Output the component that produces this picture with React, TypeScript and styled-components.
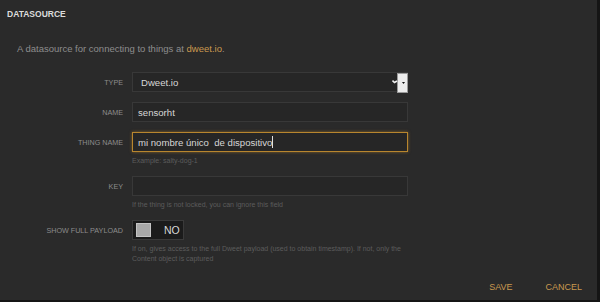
import React from "react";
import styled, { createGlobalStyle, css } from "styled-components";

const Global = createGlobalStyle`
  html, body { margin: 0; padding: 0; background: #151515; }
  body { font-family: "Liberation Sans", Arial, Helvetica, sans-serif; }
`;

const Page = styled.div`
  width: 600px;
  height: 302px;
  display: flex;
  background: #151515;
`;

const Panel = styled.div`
  width: 597px;
  height: 300px;
  display: flex;
  flex-direction: column;
  background: #2a2a2a;
`;

const Header = styled.div`
  height: 28px;
  padding: 8px 0 0 7px;
  box-sizing: border-box;
  font-weight: bold;
  font-size: 8.5px;
  line-height: 12px;
  color: #dcdcdc;
`;

const Body = styled.div`
  flex: 1;
  display: flex;
  flex-direction: column;
`;

const Description = styled.p`
  margin: 15px 0 0 17px;
  font-size: 9.5px;
  line-height: 12px;
  color: #8d8d8d;
`;

const Link = styled.span`
  color: #c9994f;
`;

const Form = styled.div`
  margin-top: 17px;
  display: grid;
  grid-template-columns: 123px 276px;
  column-gap: 9px;
  row-gap: 10px;
  align-items: start;
`;

const Label = styled.div`
  height: 20px;
  display: flex;
  align-items: center;
  justify-content: flex-end;
  font-size: 7.2px;
  color: #8c8c8c;
  text-transform: uppercase;
`;

const FieldCol = styled.div`
  display: flex;
  flex-direction: column;
`;

const Field = styled.div<{ $focused?: boolean; $pad?: number }>`
  position: relative;
  height: 20px;
  box-sizing: border-box;
  display: flex;
  align-items: center;
  padding-left: ${(p) => p.$pad ?? 5}px;
  background: #262626;
  border: 1px solid #383838;
  font-size: 9.6px;
  color: #d6d6d6;
  white-space: pre;
  ${(p) =>
    p.$focused &&
    css`
      border-color: #b8862e;
      box-shadow: 0 0 3px rgba(200, 140, 40, 0.55);
    `}
`;

const Caret = styled.span`
  display: inline-block;
  width: 1px;
  height: 12px;
  background: #e0e0e0;
  margin-left: 0;
`;

const SelectButton = styled.svg`
  position: absolute;
  right: -1px;
  top: 0;
`;

const Hint = styled.div`
  margin-top: 4px;
  font-size: 7px;
  line-height: 10px;
  color: #5c5c5c;
`;

const Toggle = styled.div`
  width: 52px;
  height: 20px;
  box-sizing: border-box;
  border: 1px solid #3a3a3a;
  background: #1b1b1b;
  display: flex;
  align-items: center;
  padding-left: 3px;
`;

const Knob = styled.div`
  width: 15px;
  height: 14px;
  box-sizing: border-box;
  background: #a9a9a9;
  border: 1px solid #c4c4c4;
`;

const ToggleText = styled.span`
  margin-left: 13px;
  font-size: 10.5px;
  color: #d8d8d8;
`;

const Footer = styled.div`
  height: 28px;
  padding: 2px 15px 0 0;
  box-sizing: border-box;
  display: flex;
  align-items: center;
  justify-content: flex-end;
  gap: 33px;
`;

const TextButton = styled.span`
  font-size: 9px;
  color: #c9994f;
  text-transform: uppercase;
`;

export default function App() {
  return (
    <>
      <Global />
      <Page>
        <Panel>
          <Header>DATASOURCE</Header>
          <Body>
            <Description>
              A datasource for connecting to things at <Link>dweet.io</Link>.
            </Description>
            <Form>
              <Label>Type</Label>
              <FieldCol>
                <Field $pad={8}>
                  Dweet.io
                  <SelectButton width="16" height="20" viewBox="0 0 16 20">
                    <rect x="5.5" y="0.5" width="10" height="19" fill="#ececec" stroke="#9a9a9a" />
                    <path d="M10 9 L13 9 L11.5 11 Z" fill="#111" />
                    <path d="M0.5 7.5 L2.5 9.5 L5 8" stroke="#f0f0f0" strokeWidth="1.6" fill="none" />
                  </SelectButton>
                </Field>
              </FieldCol>

              <Label>Name</Label>
              <FieldCol>
                <Field>sensorht</Field>
              </FieldCol>

              <Label>Thing name</Label>
              <FieldCol>
                <Field $focused>
                  mi nombre único  de dispositivo
                  <Caret />
                </Field>
                <Hint>Example: salty-dog-1</Hint>
              </FieldCol>

              <Label>Key</Label>
              <FieldCol>
                <Field />
                <Hint>If the thing is not locked, you can ignore this field</Hint>
              </FieldCol>

              <Label>Show full payload</Label>
              <FieldCol>
                <Toggle>
                  <Knob />
                  <ToggleText>NO</ToggleText>
                </Toggle>
                <Hint>
                  If on, gives access to the full Dweet payload (used to obtain timestamp). If
                  not, only the Content object is captured
                </Hint>
              </FieldCol>
            </Form>
          </Body>
          <Footer>
            <TextButton>Save</TextButton>
            <TextButton>Cancel</TextButton>
          </Footer>
        </Panel>
      </Page>
    </>
  );
}
